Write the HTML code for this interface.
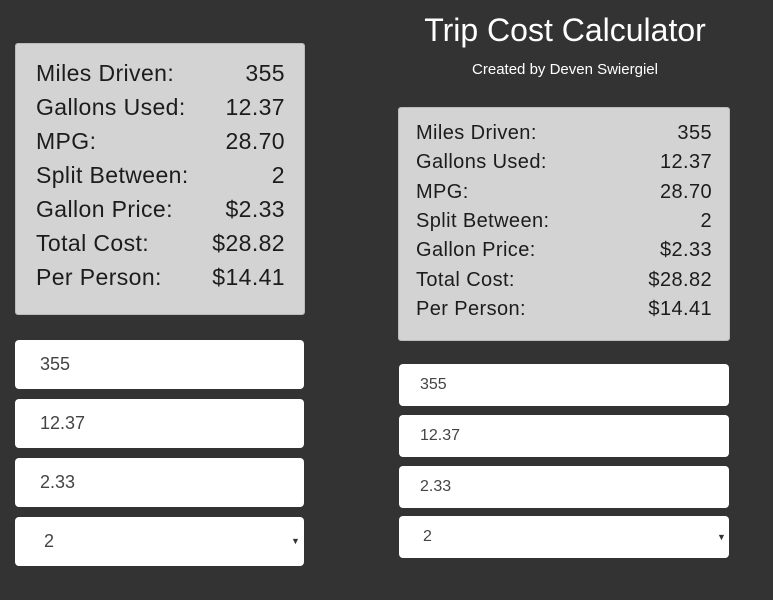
<!DOCTYPE html>
<html><head><style>
body{margin:0;width:773px;height:600px;background:#333;font-family:"Liberation Sans",sans-serif;position:relative;overflow:hidden}
.card{position:absolute;background:#d3d3d3;border:1px solid #bbb;border-radius:3px;box-sizing:border-box}
.row{position:absolute;display:flex;justify-content:space-between;color:#1c1c1c}
.in{position:absolute;background:#fff;border-radius:4px;color:#444;box-sizing:border-box;display:flex;align-items:center}
.arr{position:absolute;font-size:9px;color:#333}
h1{position:absolute;left:400px;width:330px;top:12px;margin:0;text-align:center;color:#fff;font-weight:300;font-size:32px}
.sub{position:absolute;left:400px;width:330px;top:61px;text-align:center;color:#fff;font-size:15px}
</style></head><body>
<div class="card" style="left:15px;top:43px;width:290px;height:272px"></div>
<div style="position:absolute;left:36px;top:60px;width:249px;font-size:23px;letter-spacing:0.4px">
<div style="position:relative">
<div class="row" style="top:0;width:249px"><span>Miles Driven:</span><span>355</span></div>
<div class="row" style="top:34px;width:249px"><span>Gallons Used:</span><span>12.37</span></div>
<div class="row" style="top:68px;width:249px"><span>MPG:</span><span>28.70</span></div>
<div class="row" style="top:102px;width:249px"><span>Split Between:</span><span>2</span></div>
<div class="row" style="top:136px;width:249px"><span>Gallon Price:</span><span>$2.33</span></div>
<div class="row" style="top:170px;width:249px"><span>Total Cost:</span><span>$28.82</span></div>
<div class="row" style="top:204px;width:249px"><span>Per Person:</span><span>$14.41</span></div>
</div></div>
<div class="in" style="left:15px;top:340px;width:289px;height:49px;padding-left:25px;font-size:18px">355</div>
<div class="in" style="left:15px;top:399px;width:289px;height:49px;padding-left:25px;font-size:18px">12.37</div>
<div class="in" style="left:15px;top:458px;width:289px;height:49px;padding-left:25px;font-size:18px">2.33</div>
<div class="in" style="left:15px;top:517px;width:289px;height:49px;padding-left:29px;font-size:18px">2</div>
<div class="arr" style="left:291px;top:536px">▼</div>

<h1>Trip Cost Calculator</h1>
<div class="sub">Created by Deven Swiergiel</div>
<div class="card" style="left:398px;top:107px;width:332px;height:234px"></div>
<div style="position:absolute;left:416px;top:122px;width:296px;font-size:20px;letter-spacing:0.4px">
<div style="position:relative">
<div class="row" style="top:0;width:296px"><span>Miles Driven:</span><span>355</span></div>
<div class="row" style="top:29.3px;width:296px"><span>Gallons Used:</span><span>12.37</span></div>
<div class="row" style="top:58.6px;width:296px"><span>MPG:</span><span>28.70</span></div>
<div class="row" style="top:88px;width:296px"><span>Split Between:</span><span>2</span></div>
<div class="row" style="top:117.3px;width:296px"><span>Gallon Price:</span><span>$2.33</span></div>
<div class="row" style="top:146.6px;width:296px"><span>Total Cost:</span><span>$28.82</span></div>
<div class="row" style="top:176px;width:296px"><span>Per Person:</span><span>$14.41</span></div>
</div></div>
<div class="in" style="left:399px;top:364px;width:330px;height:42px;padding-left:21px;font-size:16px">355</div>
<div class="in" style="left:399px;top:415px;width:330px;height:42px;padding-left:21px;font-size:16px">12.37</div>
<div class="in" style="left:399px;top:466px;width:330px;height:42px;padding-left:21px;font-size:16px">2.33</div>
<div class="in" style="left:399px;top:516px;width:330px;height:42px;padding-left:24px;font-size:16px">2</div>
<div class="arr" style="left:717px;top:532px">▼</div>
</body></html>
